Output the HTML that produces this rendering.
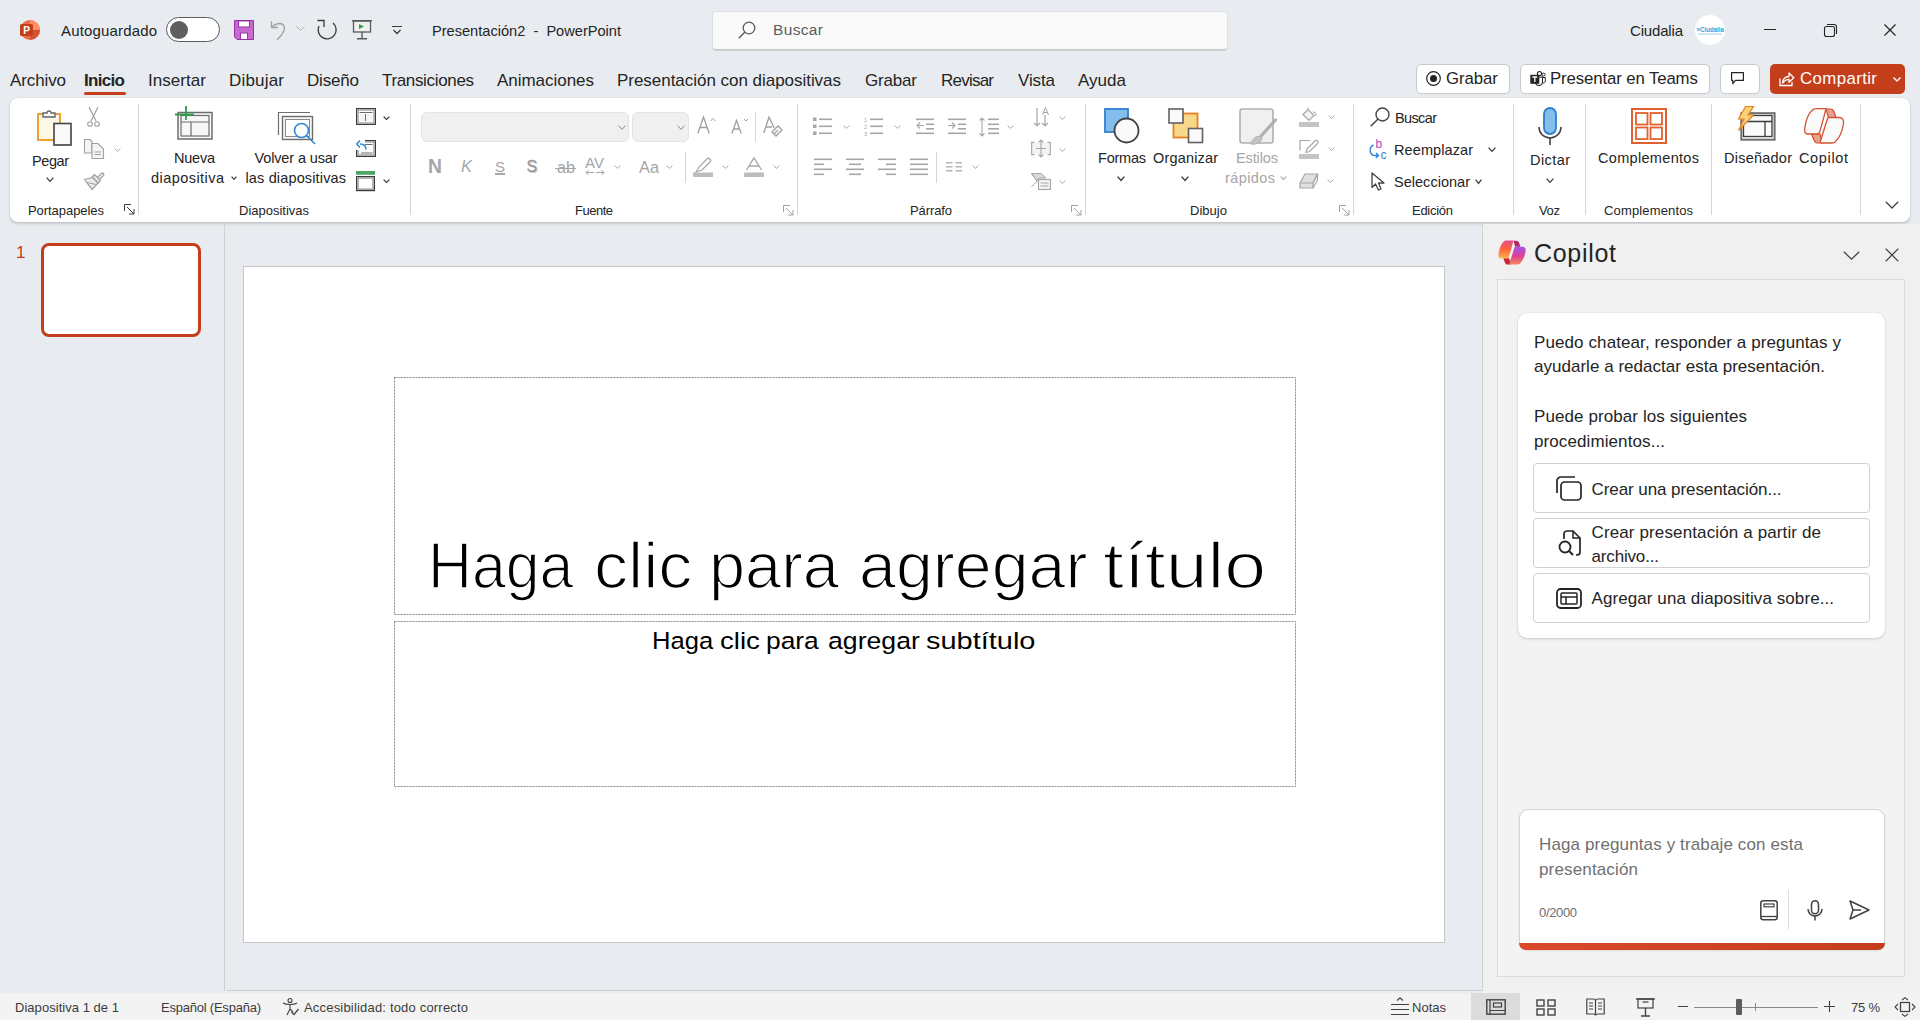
<!DOCTYPE html><html><head><meta charset="utf-8"><style>
html,body{margin:0;padding:0;width:1920px;height:1020px;overflow:hidden;background:#e8ecf0;font-family:"Liberation Sans",sans-serif;}
.t{position:absolute;white-space:nowrap;line-height:1;}
.r{position:absolute;box-sizing:border-box;}
svg.r{overflow:visible}
</style></head><body>
<svg class="r" style="left:20px;top:20px" width="20" height="20" viewBox="0 0 20 20"><circle cx="10" cy="10" r="10" fill="#ed6c47"/><path d="M10 0 A10 10 0 0 1 20 10 L10 10Z" fill="#ff8f6b"/><path d="M10 10 L20 10 A10 10 0 0 1 10 20Z" fill="#d35230"/>
<rect x="0" y="4" width="13" height="12" rx="1.5" fill="#c43e1c"/><text x="6.5" y="14" font-family="Liberation Sans" font-weight="bold" font-size="10" fill="#fff" text-anchor="middle">P</text></svg>
<div class="t" style="left:61.00px;top:23.30px;font-size:15.00px;color:#242424;letter-spacing:0.160px;">Autoguardado</div>
<div class="r" style="left:166px;top:17px;width:54px;height:25px;border:1px solid #5c5c5c;border-radius:13px;background:#fff"></div>
<div class="r" style="left:170px;top:21px;width:18px;height:18px;border-radius:50%;background:#5f5f5f"></div>
<svg class="r" style="left:234px;top:20px" width="20" height="20" viewBox="0 0 20 20"><path d="M0.5 0.5 H19.5 V19.5 H3 L0.5 17 Z" fill="#c86bd0" stroke="#9b2fae" stroke-width="1"/>
<rect x="4.5" y="1" width="11" height="6" fill="#fff" stroke="#9b2fae" stroke-width="1"/><rect x="6.5" y="13" width="7" height="6.5" fill="#fff" stroke="#9b2fae" stroke-width="1"/></svg>
<svg class="r" style="left:270px;top:20px" width="20" height="20" viewBox="0 0 20 20"><path d="M1.5 1 V7.5 H8" fill="none" stroke="#a0a0a0" stroke-width="1.3"/><path d="M2 7.5 C5 3 12 2 14 6 C16 10 11 16 7 20" fill="none" stroke="#a0a0a0" stroke-width="1.3"/></svg>
<svg class="r" style="left:296px;top:26px" width="9" height="6" viewBox="0 0 9 6"><path d="M0.5 0.5 L4.5 4.5 L8.5 0.5" fill="none" stroke="#b0b0b0" stroke-width="1"/></svg>
<svg class="r" style="left:317px;top:20px" width="20" height="20" viewBox="0 0 20 20"><path d="M2 6 A9 9 0 1 0 16 3" transform="translate(0,0)" fill="none" stroke="#3b3b3b" stroke-width="1.3"/><path d="M0.5 0.5 H7 V7" fill="none" stroke="#3b3b3b" stroke-width="1.3"/></svg>
<svg class="r" style="left:352px;top:20px" width="20" height="20" viewBox="0 0 20 20"><rect x="1.5" y="1" width="17" height="11" fill="#f0f0f0" stroke="#5a5a5a" stroke-width="1.3"/><path d="M0 0.7 H20" stroke="#5a5a5a" stroke-width="1.4"/><path d="M7 4 L12 6.5 L7 9Z" fill="#2aa24a"/><path d="M10 12 V18.5 M5 18.8 H15" stroke="#5a5a5a" stroke-width="1.4"/></svg>
<svg class="r" style="left:392px;top:26px" width="10" height="10" viewBox="0 0 10 10"><path d="M0 0.5 H10" stroke="#3b3b3b" stroke-width="1"/><path d="M1.5 4 L5 7.5 L8.5 4" fill="none" stroke="#3b3b3b" stroke-width="1.3"/></svg>
<div class="t" style="left:432.00px;top:23.63px;font-size:14.60px;color:#242424;">Presentación2&nbsp;&nbsp;-&nbsp;&nbsp;PowerPoint</div>
<div class="r" style="left:712px;top:11px;width:516px;height:39px;background:#fafafa;border-radius:4.5px;border:1px solid #dedede;border-bottom-color:#c8c8c8;box-shadow:0 1px 0.5px rgba(0,0,0,0.10)"></div>
<svg class="r" style="left:738px;top:21px" width="18" height="18" viewBox="0 0 18 18"><circle cx="11" cy="7" r="5.8" fill="none" stroke="#5c5c5c" stroke-width="1.3"/><path d="M7 11 L0.8 17.2" stroke="#5c5c5c" stroke-width="1.4"/></svg>
<div class="t" style="left:773.00px;top:21.87px;font-size:15.50px;color:#5c5c5c;letter-spacing:0.352px;">Buscar</div>
<div class="t" style="left:1630.00px;top:23.30px;font-size:15.00px;color:#242424;letter-spacing:-0.171px;">Ciudalia</div>
<div class="r" style="left:1695px;top:15px;width:30px;height:30px;border-radius:50%;background:#fff"></div>
<svg class="r" style="left:1695px;top:15px" width="30" height="30" viewBox="0 0 30 30"><text x="1.5" y="16.8" font-family="Liberation Sans" font-weight="bold" font-size="6.8" fill="#1ba8e4" textLength="27.5" lengthAdjust="spacingAndGlyphs">&#187;Ciudalia</text><rect x="3" y="18.5" width="24" height="1.2" fill="#a8d8f0"/></svg>
<div class="r" style="left:1764px;top:29px;width:12px;height:1px;background:#242424"></div>
<svg class="r" style="left:1824px;top:24px" width="13" height="13" viewBox="0 0 13 13"><rect x="0.5" y="2.5" width="10" height="10" rx="2" fill="none" stroke="#242424" stroke-width="1.1"/><path d="M3 0.5 H10 A2.5 2.5 0 0 1 12.5 3 V10" fill="none" stroke="#242424" stroke-width="1.1"/></svg>
<svg class="r" style="left:1884px;top:24px" width="12" height="12" viewBox="0 0 12 12"><path d="M0.5 0.5 L11.5 11.5 M11.5 0.5 L0.5 11.5" stroke="#242424" stroke-width="1.2"/></svg>
<div class="t" style="left:10.00px;top:71.60px;font-size:17.00px;color:#242424;letter-spacing:-0.114px;">Archivo</div>
<div class="t" style="left:84.00px;top:71.60px;font-size:17.00px;color:#242424;letter-spacing:-0.678px;font-weight:bold;">Inicio</div>
<div class="t" style="left:148.00px;top:71.60px;font-size:17.00px;color:#242424;letter-spacing:0.053px;">Insertar</div>
<div class="t" style="left:229.00px;top:71.60px;font-size:17.00px;color:#242424;letter-spacing:0.191px;">Dibujar</div>
<div class="t" style="left:307.00px;top:71.60px;font-size:17.00px;color:#242424;letter-spacing:-0.183px;">Diseño</div>
<div class="t" style="left:382.00px;top:71.60px;font-size:17.00px;color:#242424;letter-spacing:-0.340px;">Transiciones</div>
<div class="t" style="left:497.00px;top:71.60px;font-size:17.00px;color:#242424;letter-spacing:-0.032px;">Animaciones</div>
<div class="t" style="left:617.00px;top:71.60px;font-size:17.00px;color:#242424;letter-spacing:-0.032px;">Presentación con diapositivas</div>
<div class="t" style="left:865.00px;top:71.60px;font-size:17.00px;color:#242424;letter-spacing:-0.181px;">Grabar</div>
<div class="t" style="left:941.00px;top:71.60px;font-size:17.00px;color:#242424;letter-spacing:-0.770px;">Revisar</div>
<div class="t" style="left:1018.00px;top:71.60px;font-size:17.00px;color:#242424;letter-spacing:-0.121px;">Vista</div>
<div class="t" style="left:1078.00px;top:71.60px;font-size:17.00px;color:#242424;letter-spacing:0.027px;">Ayuda</div>
<div class="r" style="left:84px;top:92px;width:42px;height:3px;background:#c43e1c;border-radius:2px"></div>
<div class="r" style="left:1416px;top:64px;width:94px;height:30px;background:#fff;border:1px solid #c9c9c9;border-radius:5px"></div>
<svg class="r" style="left:1426px;top:71px" width="15" height="15" viewBox="0 0 15 15"><circle cx="7.5" cy="7.5" r="6.8" fill="none" stroke="#242424" stroke-width="1.2"/><circle cx="7.5" cy="7.5" r="3.5" fill="#242424"/></svg>
<div class="t" style="left:1446.00px;top:70.77px;font-size:16.80px;color:#242424;letter-spacing:-0.056px;">Grabar</div>
<div class="r" style="left:1520px;top:64px;width:190px;height:30px;background:#fff;border:1px solid #c9c9c9;border-radius:5px"></div>
<svg class="r" style="left:1530px;top:71px" width="16" height="16" viewBox="0 0 16 16"><circle cx="9.5" cy="2.6" r="2.1" fill="#fff" stroke="#242424" stroke-width="1.1"/><circle cx="13.6" cy="3.6" r="1.5" fill="#fff" stroke="#242424" stroke-width="1"/><path d="M11.5 6.5 H15.3 V10.5 A2.5 2.5 0 0 1 11.5 11.5" fill="#fff" stroke="#242424" stroke-width="1"/><path d="M5.5 6 H12.5 V11 A3.5 3.5 0 0 1 5.5 11 Z" fill="#fff" stroke="#242424" stroke-width="1.1"/><rect x="0.3" y="3.8" width="9" height="9" fill="#242424"/><path d="M2.3 6 H7.3 M4.8 6 V11" stroke="#fff" stroke-width="1.3"/></svg>
<div class="t" style="left:1550.00px;top:70.77px;font-size:16.80px;color:#242424;letter-spacing:-0.119px;">Presentar en Teams</div>
<div class="r" style="left:1720px;top:64px;width:40px;height:30px;background:#fff;border:1px solid #c9c9c9;border-radius:5px"></div>
<svg class="r" style="left:1731px;top:72px" width="14" height="13" viewBox="0 0 14 13"><path d="M0.6 0.6 H12.4 V8.4 H4.5 L1.8 11.5 V8.4 H0.6Z" fill="none" stroke="#242424" stroke-width="1.2" stroke-linejoin="round"/></svg>
<div class="r" style="left:1770px;top:64px;width:135px;height:30px;background:#c43e1c;border-radius:5px"></div>
<svg class="r" style="left:1779px;top:71px" width="16" height="16" viewBox="0 0 16 16"><path d="M1 7.5 V14.5 H13 V11" fill="none" stroke="#fff" stroke-width="1.3"/><path d="M3.5 12 C3.5 8 6.5 5.5 10 5.5 V2 L14.8 6.8 L10 11.3 V8.3 C7.5 8.3 5.5 9.5 3.5 12Z" fill="none" stroke="#fff" stroke-width="1.3" stroke-linejoin="round"/></svg>
<div class="t" style="left:1800.00px;top:70.77px;font-size:16.80px;color:#ffffff;letter-spacing:0.407px;">Compartir</div>
<svg class="r" style="left:1893px;top:77px" width="8" height="5" viewBox="0 0 8 5"><path d="M0.5 0.5 L4 4 L7.5 0.5" fill="none" stroke="#fff" stroke-width="1.3"/></svg>
<div class="r" style="left:10px;top:98px;width:1900px;height:124px;background:#fff;border-radius:8px;box-shadow:0 1.5px 3px rgba(0,0,0,0.16),0 0 1px rgba(0,0,0,0.10)"></div>
<svg class="r" style="left:37px;top:108px" width="35" height="38" viewBox="0 0 35 38"><rect x="1" y="6" width="22" height="26" fill="#fff8e6" stroke="#f0a030" stroke-width="2"/>
<path d="M6 9 V5 H10 A2 2 0 0 1 14 5 H18 V9 Z" fill="#fafafa" stroke="#616161" stroke-width="1.3"/>
<rect x="17" y="15.5" width="17" height="21.5" fill="#fafafa" stroke="#424242" stroke-width="1.6"/></svg>
<div class="t" style="left:32.00px;top:153.72px;font-size:14.50px;color:#242424;letter-spacing:-0.423px;">Pegar</div>
<svg class="r" style="left:46px;top:177px" width="8" height="5" viewBox="0 0 8 5"><path d="M0.6 0.6 L4.0 4.4 L7.4 0.6" fill="none" stroke="#3b3b3b" stroke-width="1.2"/></svg>
<svg class="r" style="left:87px;top:107px" width="13" height="20" viewBox="0 0 13 20"><path d="M2 0 L9 14 M11 0 L4 14" stroke="#a0a0a0" stroke-width="1.2"/><circle cx="3" cy="17" r="2.3" fill="none" stroke="#a0a0a0" stroke-width="1.1"/><circle cx="10" cy="17" r="2.3" fill="none" stroke="#a0a0a0" stroke-width="1.1"/></svg>
<svg class="r" style="left:84px;top:139px" width="21" height="20" viewBox="0 0 21 20"><path d="M0.5 0.5 H6 L8 2.5 V14 H0.5Z" fill="#f5f5f5" stroke="#a0a0a0" stroke-width="1.1"/><path d="M8 4.5 H14 L19.5 10 V19.5 H8Z" fill="#f5f5f5" stroke="#a0a0a0" stroke-width="1.1"/><path d="M10.5 13 H17 M10.5 15.5 H17" stroke="#a0a0a0" stroke-width="1"/></svg>
<svg class="r" style="left:114px;top:148px" width="7" height="4" viewBox="0 0 7 4"><path d="M0.6 0.6 L3.5 3.4 L6.4 0.6" fill="none" stroke="#b0b0b0" stroke-width="1"/></svg>
<svg class="r" style="left:84px;top:171px" width="20" height="19" viewBox="0 0 20 19"><path d="M13.5 6.5 L17.5 2.5 A1.4 1.4 0 0 1 19.5 4.5 L15.5 8.5" fill="#f3f3f3" stroke="#a0a0a0" stroke-width="1.2"/><path d="M8 6 L10.5 3.5 L16.5 9.5 L14 12 Z" fill="#e6e6e6" stroke="#a0a0a0" stroke-width="1.2" stroke-linejoin="round"/><path d="M0.5 8.5 L8.5 6.5 L14 12 L8 18.5 Z" fill="#ececec" stroke="#a0a0a0" stroke-width="1.2" stroke-linejoin="round"/><path d="M3 11.5 L12 13.5 M4 13 L8 18" fill="none" stroke="#a0a0a0" stroke-width="1"/></svg>
<div class="t" style="left:28.00px;top:203.99px;font-size:13.00px;color:#242424;letter-spacing:-0.055px;">Portapapeles</div>
<svg class="r" style="left:124px;top:204px" width="11" height="11" viewBox="0 0 11 11"><path d="M0.5 7 V0.5 H7" fill="none" stroke="#3b3b3b" stroke-width="1"/><path d="M3 3 L10 10 M10 5 V10 H5" fill="none" stroke="#3b3b3b" stroke-width="1"/></svg>
<div class="r" style="left:138px;top:104px;width:1px;height:111px;background:#d6d6d6"></div>
<svg class="r" style="left:175px;top:106px" width="39" height="34" viewBox="0 0 39 34"><rect x="3" y="6.5" width="34" height="26.5" fill="#f7f7f7" stroke="#6e6e6e" stroke-width="1.5"/><rect x="6" y="9.5" width="28" height="20.5" fill="none" stroke="#6e6e6e" stroke-width="1.2"/>
<path d="M6 16 H34 M16 16 V30" stroke="#6e6e6e" stroke-width="1.2"/><path d="M11 0 V14 M0 8.5 H19" stroke="#2e9e4e" stroke-width="1.8"/></svg>
<div class="t" style="left:174.00px;top:151.22px;font-size:14.50px;color:#242424;letter-spacing:-0.228px;">Nueva</div>
<div class="t" style="left:151.00px;top:170.72px;font-size:14.50px;color:#242424;letter-spacing:0.449px;">diapositiva</div>
<svg class="r" style="left:231px;top:176px" width="6" height="4" viewBox="0 0 6 4"><path d="M0.6 0.6 L3.0 3.4 L5.4 0.6" fill="none" stroke="#3b3b3b" stroke-width="1.2"/></svg>
<svg class="r" style="left:278px;top:112px" width="38" height="35" viewBox="0 0 38 35"><path d="M0.5 23 V0.5 H32" fill="none" stroke="#6e6e6e" stroke-width="1.2"/><rect x="4.5" y="4.5" width="30" height="23" fill="#f5f5f5" stroke="#6e6e6e" stroke-width="1.4"/><rect x="7.5" y="7.5" width="24" height="17" fill="#fff" stroke="#8a8a8a" stroke-width="1"/>
<circle cx="23.5" cy="18.5" r="7" fill="#fff" stroke="#2f86d4" stroke-width="1.6"/><path d="M28.5 23.5 L37 32" stroke="#2f86d4" stroke-width="1.6"/></svg>
<div class="t" style="left:254.50px;top:151.22px;font-size:14.50px;color:#242424;letter-spacing:-0.135px;">Volver a usar</div>
<div class="t" style="left:245.50px;top:170.72px;font-size:14.50px;color:#242424;letter-spacing:0.145px;">las diapositivas</div>
<svg class="r" style="left:356px;top:108px" width="20" height="17" viewBox="0 0 20 17"><rect x="0.6" y="0.6" width="18.8" height="15.8" fill="#fff" stroke="#3b3b3b" stroke-width="1.2"/><rect x="2" y="2" width="16" height="13" fill="none" stroke="#a0a0a0" stroke-width="1.4"/><path d="M3.5 4.5 H16.5 M9.5 6 V13" stroke="#6e6e6e" stroke-width="1.2"/><rect x="3.5" y="6" width="5" height="7" fill="#f5f5f5"/><rect x="10.5" y="6" width="6" height="7" fill="#f5f5f5"/></svg>
<svg class="r" style="left:383px;top:116px" width="7" height="4" viewBox="0 0 7 4"><path d="M0.6 0.6 L3.5 3.4 L6.4 0.6" fill="none" stroke="#3b3b3b" stroke-width="1.3"/></svg>
<svg class="r" style="left:356px;top:139px" width="20" height="18" viewBox="0 0 20 18"><rect x="0.6" y="1.6" width="18.8" height="15.8" fill="#fff" stroke="#3b3b3b" stroke-width="1.2"/><rect x="2" y="3" width="16" height="13" fill="none" stroke="#a0a0a0" stroke-width="1.4"/><path d="M5 5.5 H16.5 M5 14 H16.5" stroke="#6e6e6e" stroke-width="1.1"/><rect x="-1" y="0" width="10" height="11" fill="#fff"/><path d="M10 10.5 C10 7 8 5 4 5 M4 1.5 L0.8 5 L4 8.5" fill="none" stroke="#2f86d4" stroke-width="1.5"/></svg>
<svg class="r" style="left:356px;top:171px" width="20" height="20" viewBox="0 0 20 20"><rect x="0" y="0" width="19" height="3.8" fill="#4aa864"/><rect x="0.6" y="5.6" width="17.8" height="14" fill="#fff" stroke="#3b3b3b" stroke-width="1.2"/><rect x="2" y="7" width="15" height="11.2" fill="none" stroke="#a0a0a0" stroke-width="1.5"/></svg>
<svg class="r" style="left:383px;top:179px" width="7" height="4" viewBox="0 0 7 4"><path d="M0.6 0.6 L3.5 3.4 L6.4 0.6" fill="none" stroke="#3b3b3b" stroke-width="1.3"/></svg>
<div class="t" style="left:239.00px;top:203.99px;font-size:13.00px;color:#242424;letter-spacing:-0.007px;">Diapositivas</div>
<div class="r" style="left:410px;top:104px;width:1px;height:111px;background:#d6d6d6"></div>
<div class="r" style="left:421px;top:112px;width:208px;height:30px;background:#f0f0f0;border:1px solid #e3e3e3;border-radius:6px"></div>
<svg class="r" style="left:618px;top:125px" width="8" height="5" viewBox="0 0 8 5"><path d="M0.6 0.6 L4.0 4.4 L7.4 0.6" fill="none" stroke="#8a8a8a" stroke-width="1"/></svg>
<div class="r" style="left:632px;top:112px;width:57px;height:30px;background:#f0f0f0;border:1px solid #e3e3e3;border-radius:6px"></div>
<svg class="r" style="left:677px;top:125px" width="8" height="5" viewBox="0 0 8 5"><path d="M0.6 0.6 L4.0 4.4 L7.4 0.6" fill="none" stroke="#8a8a8a" stroke-width="1"/></svg>
<svg class="r" style="left:697px;top:116px" width="20" height="18" viewBox="0 0 20 18"><path d="M0.8 17.5 L6.5 1 L12.2 17.5 M3 11.5 H10" fill="none" stroke="#a0a0a0" stroke-width="1.3"/><path d="M13.5 5 L16 2.5 L18.5 5" fill="none" stroke="#a0a0a0" stroke-width="1"/></svg>
<svg class="r" style="left:731px;top:118px" width="18" height="16" viewBox="0 0 18 16"><path d="M0.8 15.5 L5.5 2.5 L10.2 15.5 M2.5 11 H8.5" fill="none" stroke="#a0a0a0" stroke-width="1.3"/><path d="M13 1 L15 3 L17 1" fill="none" stroke="#a0a0a0" stroke-width="1"/></svg>
<div class="r" style="left:755px;top:112px;width:1px;height:30px;background:#d6d6d6"></div>
<svg class="r" style="left:763px;top:116px" width="20" height="20" viewBox="0 0 20 20"><path d="M0.8 17 L6 1 L11.2 12 M3 11 H9" fill="none" stroke="#a0a0a0" stroke-width="1.3"/><path d="M9 16 L15 10 L19 14 L13 20Z M11 18 L15 14" fill="none" stroke="#a0a0a0" stroke-width="1.3"/></svg>
<div class="t" style="left:428.00px;top:156.58px;font-size:19.39px;color:#a6a6a6;font-weight:bold">N</div>
<div class="t" style="left:461.00px;top:158.03px;font-size:16.49px;color:#a6a6a6;font-style:italic">K</div>
<div class="t" style="left:495.00px;top:159.29px;font-size:15.00px;color:#a6a6a6;">S</div>
<div class="r" style="left:495px;top:173px;width:10px;height:2px;background:#a6a6a6"></div>
<div class="t" style="left:526.50px;top:158.95px;font-size:16.00px;color:#9a9a9a;text-shadow:1px 1px 0 #d6d6d6;-webkit-text-stroke:0.4px #9a9a9a">S</div>
<div class="t" style="left:557.00px;top:159.29px;font-size:16.18px;color:#a6a6a6;">ab</div>
<div class="r" style="left:555px;top:168px;width:21px;height:1.2px;background:#a6a6a6"></div>
<div class="t" style="left:585.00px;top:155.23px;font-size:15.08px;color:#a6a6a6;">AV</div>
<svg class="r" style="left:585px;top:168px" width="20" height="9" viewBox="0 0 20 9"><path d="M1 4.5 H9 M1 4.5 L3.5 2 M1 4.5 L3.5 7 M11 4.5 H19 M19 4.5 L16.5 2 M19 4.5 L16.5 7" fill="none" stroke="#a6a6a6" stroke-width="1"/></svg>
<svg class="r" style="left:614px;top:165px" width="7" height="4" viewBox="0 0 7 4"><path d="M0.6 0.6 L3.5 3.4 L6.4 0.6" fill="none" stroke="#a6a6a6" stroke-width="1"/></svg>
<div class="t" style="left:639.00px;top:159.15px;font-size:16.35px;color:#a6a6a6;">Aa</div>
<svg class="r" style="left:666px;top:165px" width="7" height="4" viewBox="0 0 7 4"><path d="M0.6 0.6 L3.5 3.4 L6.4 0.6" fill="none" stroke="#a6a6a6" stroke-width="1"/></svg>
<div class="r" style="left:685px;top:152px;width:1px;height:31px;background:#d6d6d6"></div>
<svg class="r" style="left:693px;top:157px" width="20" height="20" viewBox="0 0 20 20"><path d="M3 15 L6 10 L14 2 A2 2 0 0 1 17 5 L9 13 L3 15Z" fill="none" stroke="#a6a6a6" stroke-width="1.2"/><rect x="0" y="15.5" width="20" height="4.5" fill="#bdbdbd"/></svg>
<svg class="r" style="left:722px;top:165px" width="7" height="4" viewBox="0 0 7 4"><path d="M0.6 0.6 L3.5 3.4 L6.4 0.6" fill="none" stroke="#a6a6a6" stroke-width="1"/></svg>
<svg class="r" style="left:744px;top:157px" width="20" height="20" viewBox="0 0 20 20"><path d="M2.5 13 L10 0.8 L17.5 13 M5 9 H15" fill="none" stroke="#a6a6a6" stroke-width="1.3"/><rect x="0" y="15.5" width="20" height="4.5" fill="#bdbdbd"/></svg>
<svg class="r" style="left:773px;top:165px" width="7" height="4" viewBox="0 0 7 4"><path d="M0.6 0.6 L3.5 3.4 L6.4 0.6" fill="none" stroke="#a6a6a6" stroke-width="1"/></svg>
<div class="t" style="left:575.00px;top:203.99px;font-size:13.00px;color:#242424;letter-spacing:-0.494px;">Fuente</div>
<svg class="r" style="left:783px;top:205px" width="11" height="11" viewBox="0 0 11 11"><path d="M0.5 7 V0.5 H7" fill="none" stroke="#a0a0a0" stroke-width="1"/><path d="M3 3 L10 10 M10 5 V10 H5" fill="none" stroke="#a0a0a0" stroke-width="1"/></svg>
<div class="r" style="left:797px;top:104px;width:1px;height:111px;background:#d6d6d6"></div>
<svg class="r" style="left:813px;top:117px" width="20" height="20" viewBox="0 0 20 20"><rect x="0" y="0.5" width="3.5" height="3.5" fill="#a6a6a6"/><rect x="0" y="7.5" width="3.5" height="3.5" fill="#a6a6a6"/><rect x="0" y="14.5" width="3.5" height="3.5" fill="#a6a6a6"/><rect x="6" y="1.5" width="13" height="1.6" fill="#a6a6a6"/><rect x="6" y="8.5" width="13" height="1.6" fill="#a6a6a6"/><rect x="6" y="15.5" width="13" height="1.6" fill="#a6a6a6"/></svg>
<svg class="r" style="left:843px;top:125px" width="7" height="4" viewBox="0 0 7 4"><path d="M0.6 0.6 L3.5 3.4 L6.4 0.6" fill="none" stroke="#a6a6a6" stroke-width="1"/></svg>
<svg class="r" style="left:864px;top:117px" width="20" height="20" viewBox="0 0 20 20"><text x="0" y="5" font-size="5.5" fill="#a6a6a6" font-family="Liberation Sans">1</text><text x="0" y="12" font-size="5.5" fill="#a6a6a6" font-family="Liberation Sans">2</text><text x="0" y="19" font-size="5.5" fill="#a6a6a6" font-family="Liberation Sans">3</text><rect x="6" y="1.5" width="13" height="1.6" fill="#a6a6a6"/><rect x="6" y="8.5" width="13" height="1.6" fill="#a6a6a6"/><rect x="6" y="15.5" width="13" height="1.6" fill="#a6a6a6"/></svg>
<svg class="r" style="left:894px;top:125px" width="7" height="4" viewBox="0 0 7 4"><path d="M0.6 0.6 L3.5 3.4 L6.4 0.6" fill="none" stroke="#a6a6a6" stroke-width="1"/></svg>
<svg class="r" style="left:916px;top:117px" width="18" height="20" viewBox="0 0 18 20"><rect x="0" y="1.5" width="18" height="1.6" fill="#a6a6a6"/><rect x="10" y="6.5" width="8" height="1.6" fill="#a6a6a6"/><rect x="10" y="11" width="8" height="1.6" fill="#a6a6a6"/><rect x="0" y="15.5" width="18" height="1.6" fill="#a6a6a6"/><path d="M8 8.5 H1 M4 5.5 L1 8.5 L4 11.5" fill="none" stroke="#a6a6a6" stroke-width="1.1"/></svg>
<svg class="r" style="left:948px;top:117px" width="18" height="20" viewBox="0 0 18 20"><rect x="0" y="1.5" width="18" height="1.6" fill="#a6a6a6"/><rect x="10" y="6.5" width="8" height="1.6" fill="#a6a6a6"/><rect x="10" y="11" width="8" height="1.6" fill="#a6a6a6"/><rect x="0" y="15.5" width="18" height="1.6" fill="#a6a6a6"/><path d="M0 8.5 H7 M4 5.5 L7 8.5 L4 11.5" fill="none" stroke="#a6a6a6" stroke-width="1.1"/></svg>
<svg class="r" style="left:979px;top:117px" width="20" height="20" viewBox="0 0 20 20"><path d="M3 1 V19 M0.5 3.5 L3 1 L5.5 3.5 M0.5 16.5 L3 19 L5.5 16.5" fill="none" stroke="#a6a6a6" stroke-width="1.1"/><rect x="9" y="1.5" width="11" height="1.6" fill="#a6a6a6"/><rect x="9" y="6.5" width="11" height="1.6" fill="#a6a6a6"/><rect x="9" y="11" width="11" height="1.6" fill="#a6a6a6"/><rect x="9" y="15.5" width="11" height="1.6" fill="#a6a6a6"/></svg>
<svg class="r" style="left:1007px;top:125px" width="7" height="4" viewBox="0 0 7 4"><path d="M0.6 0.6 L3.5 3.4 L6.4 0.6" fill="none" stroke="#a6a6a6" stroke-width="1"/></svg>
<svg class="r" style="left:814px;top:158px" width="20" height="20" viewBox="0 0 20 20"><rect x="0" y="0.5" width="18" height="1.6" fill="#a6a6a6"/><rect x="0" y="5.5" width="10" height="1.6" fill="#a6a6a6"/><rect x="0" y="10.5" width="18" height="1.6" fill="#a6a6a6"/><rect x="0" y="15.5" width="10" height="1.6" fill="#a6a6a6"/></svg>
<svg class="r" style="left:846px;top:158px" width="20" height="20" viewBox="0 0 20 20"><rect x="0" y="0.5" width="18" height="1.6" fill="#a6a6a6"/><rect x="3" y="5.5" width="12" height="1.6" fill="#a6a6a6"/><rect x="0" y="10.5" width="18" height="1.6" fill="#a6a6a6"/><rect x="3" y="15.5" width="12" height="1.6" fill="#a6a6a6"/></svg>
<svg class="r" style="left:878px;top:158px" width="20" height="20" viewBox="0 0 20 20"><rect x="0" y="0.5" width="18" height="1.6" fill="#a6a6a6"/><rect x="8" y="5.5" width="10" height="1.6" fill="#a6a6a6"/><rect x="0" y="10.5" width="18" height="1.6" fill="#a6a6a6"/><rect x="8" y="15.5" width="10" height="1.6" fill="#a6a6a6"/></svg>
<svg class="r" style="left:910px;top:158px" width="20" height="20" viewBox="0 0 20 20"><rect x="0" y="0.5" width="18" height="1.6" fill="#a6a6a6"/><rect x="0" y="5.5" width="18" height="1.6" fill="#a6a6a6"/><rect x="0" y="10.5" width="18" height="1.6" fill="#a6a6a6"/><rect x="0" y="15.5" width="18" height="1.6" fill="#a6a6a6"/></svg>
<div class="r" style="left:936px;top:152px;width:1px;height:31px;background:#d6d6d6"></div>
<svg class="r" style="left:946px;top:162px" width="17" height="10" viewBox="0 0 17 10"><rect x="0" y="0" width="6.5" height="1.5" fill="#b5b5b5"/><rect x="0" y="4" width="6.5" height="1.5" fill="#b5b5b5"/><rect x="0" y="8" width="6.5" height="1.5" fill="#b5b5b5"/><rect x="9.5" y="0" width="6.5" height="1.5" fill="#b5b5b5"/><rect x="9.5" y="4" width="6.5" height="1.5" fill="#b5b5b5"/><rect x="9.5" y="8" width="6.5" height="1.5" fill="#b5b5b5"/></svg>
<svg class="r" style="left:972px;top:165px" width="7" height="4" viewBox="0 0 7 4"><path d="M0.6 0.6 L3.5 3.4 L6.4 0.6" fill="none" stroke="#a6a6a6" stroke-width="1"/></svg>
<svg class="r" style="left:1033px;top:107px" width="18" height="20" viewBox="0 0 18 20"><path d="M4 1 V19 M1 16 L4 19 L7 16 M12 8 V19 M9 16 L12 19 L15 16" fill="none" stroke="#a6a6a6" stroke-width="1.2"/><path d="M9.5 8 L12.5 0.5 L15.5 8 M10.5 5.5 H14.5" fill="none" stroke="#a6a6a6" stroke-width="1"/></svg>
<svg class="r" style="left:1059px;top:116px" width="7" height="4" viewBox="0 0 7 4"><path d="M0.6 0.6 L3.5 3.4 L6.4 0.6" fill="none" stroke="#a6a6a6" stroke-width="1"/></svg>
<svg class="r" style="left:1031px;top:139px" width="20" height="19" viewBox="0 0 20 19"><path d="M3.5 3.5 H0.8 V15.5 H3.5 M16.5 3.5 H19.2 V15.5 H16.5" fill="none" stroke="#a6a6a6" stroke-width="1.4"/><rect x="1.5" y="4" width="17" height="11" fill="#f3f3f3"/><path d="M10 1 V18 M7.5 3.5 L10 1 L12.5 3.5 M7.5 15.5 L10 18 L12.5 15.5 M5 9.5 H15" fill="none" stroke="#a6a6a6" stroke-width="1.1"/></svg>
<svg class="r" style="left:1059px;top:148px" width="7" height="4" viewBox="0 0 7 4"><path d="M0.6 0.6 L3.5 3.4 L6.4 0.6" fill="none" stroke="#a6a6a6" stroke-width="1"/></svg>
<svg class="r" style="left:1031px;top:173px" width="20" height="17" viewBox="0 0 20 17"><path d="M0.5 0.5 H10 L15 5 H8 L6 8 L4 5 Z" fill="#d9d9d9" stroke="#a6a6a6" stroke-width="1"/><path d="M0.5 0.5 L6 8 L0.5 14" fill="none" stroke="#a6a6a6" stroke-width="1"/><rect x="7.5" y="6.5" width="12" height="10" fill="#f3f3f3" stroke="#a6a6a6" stroke-width="1.1"/><path d="M9.5 10 H17.5 M9.5 13 H17.5" stroke="#a6a6a6" stroke-width="1"/></svg>
<svg class="r" style="left:1059px;top:180px" width="7" height="4" viewBox="0 0 7 4"><path d="M0.6 0.6 L3.5 3.4 L6.4 0.6" fill="none" stroke="#a6a6a6" stroke-width="1"/></svg>
<div class="t" style="left:910.00px;top:203.99px;font-size:13.00px;color:#242424;letter-spacing:-0.105px;">Párrafo</div>
<svg class="r" style="left:1071px;top:205px" width="11" height="11" viewBox="0 0 11 11"><path d="M0.5 7 V0.5 H7" fill="none" stroke="#a0a0a0" stroke-width="1"/><path d="M3 3 L10 10 M10 5 V10 H5" fill="none" stroke="#a0a0a0" stroke-width="1"/></svg>
<div class="r" style="left:1085px;top:104px;width:1px;height:111px;background:#d6d6d6"></div>
<svg class="r" style="left:1104px;top:108px" width="36" height="36" viewBox="0 0 36 36"><rect x="1" y="1" width="23" height="23" fill="#83beec" stroke="#2f7fd1" stroke-width="1.8"/><circle cx="22.5" cy="22.5" r="12" fill="#fafafa" stroke="#424242" stroke-width="1.8"/></svg>
<div class="t" style="left:1098.00px;top:151.22px;font-size:14.50px;color:#242424;letter-spacing:-0.228px;">Formas</div>
<svg class="r" style="left:1117px;top:176px" width="8" height="5" viewBox="0 0 8 5"><path d="M0.6 0.6 L4.0 4.4 L7.4 0.6" fill="none" stroke="#3b3b3b" stroke-width="1.4"/></svg>
<svg class="r" style="left:1168px;top:108px" width="36" height="36" viewBox="0 0 36 36"><rect x="5.5" y="5.5" width="24" height="24" fill="#f8d98c" stroke="#e8801e" stroke-width="1.8"/><rect x="1" y="1" width="14" height="14" fill="#fafafa" stroke="#616161" stroke-width="1.6"/><rect x="20.5" y="20.5" width="14" height="14" fill="#fafafa" stroke="#616161" stroke-width="1.6"/></svg>
<div class="t" style="left:1153.00px;top:151.22px;font-size:14.50px;color:#242424;letter-spacing:0.168px;">Organizar</div>
<svg class="r" style="left:1181px;top:176px" width="8" height="5" viewBox="0 0 8 5"><path d="M0.6 0.6 L4.0 4.4 L7.4 0.6" fill="none" stroke="#3b3b3b" stroke-width="1.4"/></svg>
<svg class="r" style="left:1239px;top:108px" width="38" height="38" viewBox="0 0 38 38"><rect x="1" y="1" width="33" height="34" rx="2.5" fill="#f0f0f0" stroke="#b0b0b0" stroke-width="1.6"/><path d="M36.5 12 L22 28" stroke="#b0b0b0" stroke-width="3.2" stroke-linecap="round"/><path d="M12 36 C14 29 19 27 23 29 C23 34 18 37 12 36Z" fill="#c4c4c4" stroke="#b0b0b0" stroke-width="1"/></svg>
<div class="t" style="left:1236.00px;top:151.22px;font-size:14.50px;color:#a6a6a6;letter-spacing:-0.118px;">Estilos</div>
<div class="t" style="left:1225.00px;top:170.72px;font-size:14.50px;color:#a6a6a6;letter-spacing:0.408px;">rápidos</div>
<svg class="r" style="left:1280px;top:176px" width="7" height="4" viewBox="0 0 7 4"><path d="M0.6 0.6 L3.5 3.4 L6.4 0.6" fill="none" stroke="#a6a6a6" stroke-width="1.1"/></svg>
<svg class="r" style="left:1299px;top:107px" width="20" height="20" viewBox="0 0 20 20"><path d="M4 7.5 L9 2.5 L15 8.5 L10 13.5 Z" fill="#f3f3f3" stroke="#a6a6a6" stroke-width="1.2"/><path d="M9 2.5 V0.5 M14 5 C16 5 17 7 17 9" fill="none" stroke="#a6a6a6" stroke-width="1.1"/><rect x="0" y="15" width="20" height="5" fill="#c4c4c4"/></svg>
<svg class="r" style="left:1328px;top:115px" width="7" height="4" viewBox="0 0 7 4"><path d="M0.6 0.6 L3.5 3.4 L6.4 0.6" fill="none" stroke="#a6a6a6" stroke-width="1"/></svg>
<svg class="r" style="left:1299px;top:139px" width="20" height="20" viewBox="0 0 20 20"><path d="M11 1.5 H1 V11.5" fill="none" stroke="#a6a6a6" stroke-width="1.2"/><path d="M8 10 L16 2 A1.6 1.6 0 0 1 18.5 4.5 L10.5 12.5 L7 13.5Z" fill="none" stroke="#a6a6a6" stroke-width="1.2"/><rect x="0" y="15" width="20" height="5" fill="#c4c4c4"/></svg>
<svg class="r" style="left:1328px;top:147px" width="7" height="4" viewBox="0 0 7 4"><path d="M0.6 0.6 L3.5 3.4 L6.4 0.6" fill="none" stroke="#a6a6a6" stroke-width="1"/></svg>
<svg class="r" style="left:1299px;top:172px" width="20" height="18" viewBox="0 0 20 18"><path d="M1 11 L6 2 H18.5 L14 11 V16 H1Z" fill="#e0e0e0" stroke="#a6a6a6" stroke-width="1.2"/><path d="M1 11 H14 L18.5 2 V8 L14 16" fill="none" stroke="#a6a6a6" stroke-width="1.2"/></svg>
<svg class="r" style="left:1327px;top:179px" width="7" height="4" viewBox="0 0 7 4"><path d="M0.6 0.6 L3.5 3.4 L6.4 0.6" fill="none" stroke="#a6a6a6" stroke-width="1"/></svg>
<div class="t" style="left:1190.00px;top:203.99px;font-size:13.00px;color:#242424;letter-spacing:0.029px;">Dibujo</div>
<svg class="r" style="left:1339px;top:205px" width="11" height="11" viewBox="0 0 11 11"><path d="M0.5 7 V0.5 H7" fill="none" stroke="#a0a0a0" stroke-width="1"/><path d="M3 3 L10 10 M10 5 V10 H5" fill="none" stroke="#a0a0a0" stroke-width="1"/></svg>
<div class="r" style="left:1353px;top:104px;width:1px;height:111px;background:#d6d6d6"></div>
<svg class="r" style="left:1370px;top:107px" width="20" height="20" viewBox="0 0 20 20"><circle cx="12.5" cy="7.5" r="6.5" fill="#fff" stroke="#424242" stroke-width="1.4"/><path d="M8 12 L0.8 19.2" stroke="#424242" stroke-width="1.5"/></svg>
<div class="t" style="left:1395.00px;top:110.72px;font-size:14.50px;color:#242424;letter-spacing:-0.625px;">Buscar</div>
<svg class="r" style="left:1369px;top:138px" width="19" height="22" viewBox="0 0 19 22"><text x="6.5" y="10" font-size="12" fill="#b146c2" font-family="Liberation Sans">b</text><text x="11.5" y="21" font-size="12" fill="#2f86d4" font-family="Liberation Sans">c</text><path d="M4.5 7 C0 9 0 16 5 17.5 L9.5 17.5 M7 15 L9.5 17.5 L7 20" fill="none" stroke="#2f86d4" stroke-width="1.4"/></svg>
<div class="t" style="left:1394.00px;top:142.72px;font-size:14.50px;color:#242424;letter-spacing:0.093px;">Reemplazar</div>
<svg class="r" style="left:1488px;top:147px" width="8" height="5" viewBox="0 0 8 5"><path d="M0.6 0.6 L4.0 4.4 L7.4 0.6" fill="none" stroke="#3b3b3b" stroke-width="1.3"/></svg>
<svg class="r" style="left:1371px;top:172px" width="15" height="19" viewBox="0 0 15 19"><path d="M1 1 V15.5 L4.5 12 L7.5 18 L10 17 L7.5 11 H13Z" fill="#fff" stroke="#424242" stroke-width="1.3" stroke-linejoin="round"/></svg>
<div class="t" style="left:1394.00px;top:174.72px;font-size:14.50px;color:#242424;letter-spacing:0.024px;">Seleccionar</div>
<svg class="r" style="left:1475px;top:179px" width="7" height="5" viewBox="0 0 7 5"><path d="M0.6 0.6 L3.5 4.4 L6.4 0.6" fill="none" stroke="#3b3b3b" stroke-width="1.3"/></svg>
<div class="t" style="left:1412.00px;top:203.99px;font-size:13.00px;color:#242424;letter-spacing:-0.273px;">Edición</div>
<div class="r" style="left:1513px;top:104px;width:1px;height:111px;background:#d6d6d6"></div>
<svg class="r" style="left:1538px;top:107px" width="24" height="38" viewBox="0 0 24 38"><rect x="6" y="1" width="12" height="26" rx="6" fill="#83beec" stroke="#2f7fd1" stroke-width="1.8"/><path d="M1 20 A11 11 0 0 0 23 20" fill="none" stroke="#424242" stroke-width="1.6"/><path d="M12 31 V38" stroke="#424242" stroke-width="1.6"/></svg>
<div class="t" style="left:1530.00px;top:153.22px;font-size:14.50px;color:#242424;letter-spacing:0.427px;">Dictar</div>
<svg class="r" style="left:1546px;top:178px" width="8" height="5" viewBox="0 0 8 5"><path d="M0.6 0.6 L4.0 4.4 L7.4 0.6" fill="none" stroke="#3b3b3b" stroke-width="1.3"/></svg>
<div class="t" style="left:1539.00px;top:203.99px;font-size:13.00px;color:#242424;letter-spacing:-0.342px;">Voz</div>
<div class="r" style="left:1585px;top:104px;width:1px;height:111px;background:#d6d6d6"></div>
<svg class="r" style="left:1631px;top:108px" width="36" height="36" viewBox="0 0 36 36"><rect x="1" y="1" width="34" height="34" fill="none" stroke="#e0602f" stroke-width="2"/><rect x="5" y="5" width="11.5" height="11.5" fill="none" stroke="#e0602f" stroke-width="1.8"/><rect x="19.5" y="5" width="11.5" height="11.5" fill="none" stroke="#e0602f" stroke-width="1.8"/><rect x="5" y="19.5" width="11.5" height="11.5" fill="none" stroke="#e0602f" stroke-width="1.8"/><rect x="19.5" y="19.5" width="11.5" height="11.5" fill="none" stroke="#e0602f" stroke-width="1.8"/></svg>
<div class="t" style="left:1598.00px;top:151.22px;font-size:14.50px;color:#242424;letter-spacing:0.317px;">Complementos</div>
<div class="t" style="left:1604.00px;top:203.99px;font-size:13.00px;color:#242424;letter-spacing:0.144px;">Complementos</div>
<div class="r" style="left:1711px;top:104px;width:1px;height:111px;background:#d6d6d6"></div>
<svg class="r" style="left:1738px;top:106px" width="40" height="35" viewBox="0 0 40 35"><rect x="3.3" y="7.2" width="33.3" height="26.5" fill="#fafafa" stroke="#6e6e6e" stroke-width="2"/><rect x="5.5" y="9.5" width="28.5" height="21" fill="none" stroke="#3b3b3b" stroke-width="1.3"/><path d="M5.5 15.5 H34 M27 15.5 V30.5" stroke="#3b3b3b" stroke-width="1.3"/><path d="M7.5 0.5 H15.5 L10 9 H15.5 L0.5 24.5 L6 13 H0.5 Z" fill="#f7d27a" stroke="#e8801e" stroke-width="1.2" stroke-linejoin="miter"/></svg>
<div class="t" style="left:1724.00px;top:151.22px;font-size:14.50px;color:#242424;letter-spacing:0.239px;">Diseñador</div>
<svg class="r" style="left:1804px;top:108px" width="40" height="36" viewBox="0 0 40 36"><path d="M7.5 26 H16 L18.5 35 H13 C10.5 35 9.5 31 7.5 26 Z" fill="#e8a090" stroke="#d35230" stroke-width="1.2" stroke-linejoin="round"/><path d="M22 1 H26.5 C29.5 1 30.5 4 32 9.5 H24.5 Z" fill="#e8a090" stroke="#d35230" stroke-width="1.2" stroke-linejoin="round"/><path d="M22 1 C20 8 18 17 15.5 24.5 C15 25.5 14 26 12 26 H3.5 C1 26 0.5 24 0.7 21 C1.5 14 4 6 8 2.5 C9 1.3 10.5 0.7 12 0.7 H22 Z" fill="#fafafa" stroke="#d35230" stroke-width="1.3" stroke-linejoin="round"/><path d="M24.5 9.5 H35 C38.5 9.5 40 12 39.5 15.5 C38.5 22 36 29 32 33 C31 34.5 29.5 35 28 35 H18 C16.5 35 16 34 16.5 33 C19 25 21.5 17 23.5 10.5 Z" fill="#fafafa" stroke="#d35230" stroke-width="1.3" stroke-linejoin="round"/></svg>
<div class="t" style="left:1799.00px;top:151.22px;font-size:14.50px;color:#242424;letter-spacing:0.644px;">Copilot</div>
<div class="r" style="left:1860px;top:104px;width:1px;height:111px;background:#d6d6d6"></div>
<svg class="r" style="left:1885px;top:201px" width="14" height="8" viewBox="0 0 14 8"><path d="M0.8 0.8 L7 7 L13.2 0.8" fill="none" stroke="#424242" stroke-width="1.3"/></svg>
<div class="r" style="left:224px;top:224px;width:1px;height:767px;background:#d1d1d1"></div>
<div class="r" style="left:227px;top:990px;width:1255px;height:1px;background:#d1d1d1"></div>
<div class="t" style="left:16.00px;top:243.60px;font-size:17.00px;color:#c43e1c;">1</div>
<div class="r" style="left:41px;top:243px;width:160px;height:94px;background:#fff;border:3px solid #c43e1c;border-radius:8px"></div>
<div class="r" style="left:243px;top:266px;width:1202px;height:677px;background:#fff;border:1px solid #c6c6c6"></div>
<svg class="r" style="left:394px;top:377px" width="902" height="238" viewBox="0 0 902 238"><rect x="0.5" y="0.5" width="901" height="237" fill="none" stroke="#8a8a8a" stroke-width="1" stroke-dasharray="2 1"/></svg>
<svg class="r" style="left:394px;top:621px" width="902" height="166" viewBox="0 0 902 166"><rect x="0.5" y="0.5" width="901" height="165" fill="none" stroke="#8a8a8a" stroke-width="1" stroke-dasharray="2 1"/></svg>
<div class="t" style="left:427.79px;top:532.75px;font-size:65.00px;color:#000;transform:scaleX(0.9360);transform-origin:0 0;-webkit-text-stroke:1.6px #fff;">Haga</div>
<div class="t" style="left:593.90px;top:532.75px;font-size:65.00px;color:#000;transform:scaleX(1.0478);transform-origin:0 0;-webkit-text-stroke:1.6px #fff;">clic</div>
<div class="t" style="left:708.61px;top:532.75px;font-size:65.00px;color:#000;transform:scaleX(0.9976);transform-origin:0 0;-webkit-text-stroke:1.6px #fff;">para</div>
<div class="t" style="left:858.96px;top:532.75px;font-size:65.00px;color:#000;transform:scaleX(1.0201);transform-origin:0 0;-webkit-text-stroke:1.6px #fff;">agregar</div>
<div class="t" style="left:1102.77px;top:532.75px;font-size:65.00px;color:#000;transform:scaleX(1.1578);transform-origin:0 0;-webkit-text-stroke:1.6px #fff;">título</div>
<div class="t" style="left:651.96px;top:629.25px;font-size:24.50px;color:#000;transform:scaleX(1.0442);transform-origin:0 0;">Haga</div>
<div class="t" style="left:719.93px;top:629.25px;font-size:24.50px;color:#000;transform:scaleX(1.1276);transform-origin:0 0;">clic</div>
<div class="t" style="left:766.33px;top:629.25px;font-size:24.50px;color:#000;transform:scaleX(1.0759);transform-origin:0 0;">para</div>
<div class="t" style="left:827.57px;top:629.25px;font-size:24.50px;color:#000;transform:scaleX(1.0878);transform-origin:0 0;">agregar</div>
<div class="t" style="left:925.83px;top:629.25px;font-size:24.50px;color:#000;transform:scaleX(1.1815);transform-origin:0 0;">subtítulo</div>
<div class="r" style="left:1482px;top:224px;width:438px;height:769px;background:#f0f0f0"></div>
<div class="r" style="left:1482px;top:224px;width:1px;height:767px;background:#d1d1d1"></div>
<svg class="r" style="left:1498px;top:240px" width="28" height="26" viewBox="0 0 28 26"><defs><linearGradient id="cgl" x1="0" y1="0" x2="0" y2="1"><stop offset="0" stop-color="#ec4c8c"/><stop offset="0.5" stop-color="#ff6438"/><stop offset="1" stop-color="#ffb44c"/></linearGradient><linearGradient id="cgr" x1="0" y1="0" x2="0" y2="1"><stop offset="0" stop-color="#a455ea"/><stop offset="0.55" stop-color="#e2408e"/><stop offset="1" stop-color="#f48a5c"/></linearGradient></defs><g transform="scale(0.7)"><path d="M7.5 26 H16 L18.5 35 H13 C10.5 35 9.5 31 7.5 26 Z" fill="#c9283c"/><path d="M22 1 H26.5 C29.5 1 30.5 4 32 9.5 H24.5 Z" fill="#b02c6c"/><path d="M22 1 C20 8 18 17 15.5 24.5 C15 25.5 14 26 12 26 H3.5 C1 26 0.5 24 0.7 21 C1.5 14 4 6 8 2.5 C9 1.3 10.5 0.7 12 0.7 H22 Z" fill="url(#cgl)"/><path d="M24.5 9.5 H35 C38.5 9.5 40 12 39.5 15.5 C38.5 22 36 29 32 33 C31 34.5 29.5 35 28 35 H18 C16.5 35 16 34 16.5 33 C19 25 21.5 17 23.5 10.5 Z" fill="url(#cgr)"/></g></svg>
<div class="t" style="left:1534.00px;top:241.32px;font-size:25.00px;color:#242424;letter-spacing:0.697px;">Copilot</div>
<svg class="r" style="left:1843px;top:251px" width="17" height="9" viewBox="0 0 17 9"><path d="M0.8 0.8 L8.5 8.2 L16.2 0.8" fill="none" stroke="#424242" stroke-width="1.3"/></svg>
<svg class="r" style="left:1885px;top:248px" width="14" height="14" viewBox="0 0 14 14"><path d="M0.6 0.6 L13.4 13.4 M13.4 0.6 L0.6 13.4" stroke="#424242" stroke-width="1.3"/></svg>
<div class="r" style="left:1497px;top:279px;width:408px;height:698px;background:#f3f3f3;border:1px solid #dcdcdc"></div>
<div class="r" style="left:1518px;top:313px;width:367px;height:325px;background:#fff;border-radius:9px;box-shadow:0 1px 3px rgba(0,0,0,0.16),0 0 1px rgba(0,0,0,0.12)"></div>
<div class="t" style="left:1534.00px;top:333.60px;font-size:17.00px;color:#242424;letter-spacing:0.099px;">Puedo chatear, responder a preguntas y</div>
<div class="t" style="left:1534.00px;top:358.10px;font-size:17.00px;color:#242424;letter-spacing:0.024px;">ayudarle a redactar esta presentación.</div>
<div class="t" style="left:1534.00px;top:408.10px;font-size:17.00px;color:#242424;letter-spacing:0.087px;">Puede probar los siguientes</div>
<div class="t" style="left:1534.00px;top:433.10px;font-size:17.00px;color:#242424;letter-spacing:0.097px;">procedimientos...</div>
<div class="r" style="left:1533px;top:463px;width:337px;height:50px;background:#fff;border:1px solid #d1d1d1;border-radius:4px"></div>
<div class="r" style="left:1533px;top:518px;width:337px;height:50px;background:#fff;border:1px solid #d1d1d1;border-radius:4px"></div>
<div class="r" style="left:1533px;top:573px;width:337px;height:50px;background:#fff;border:1px solid #d1d1d1;border-radius:4px"></div>
<svg class="r" style="left:1556px;top:476px" width="26" height="25" viewBox="0 0 26 25"><rect x="5" y="6" width="20" height="18" rx="3.5" fill="none" stroke="#242424" stroke-width="1.7"/><path d="M1 17 V5 A4 4 0 0 1 5 1 H19" fill="none" stroke="#242424" stroke-width="1.7"/></svg>
<div class="t" style="left:1591.50px;top:480.60px;font-size:17.00px;color:#242424;letter-spacing:-0.076px;">Crear una presentación...</div>
<svg class="r" style="left:1557px;top:530px" width="24" height="27" viewBox="0 0 24 27"><path d="M7 9 V4 A3 3 0 0 1 10 1 H16 L23 8 V22 A3 3 0 0 1 20 25 H19" fill="none" stroke="#242424" stroke-width="1.7"/><path d="M16 1 V8 H23" fill="none" stroke="#242424" stroke-width="1.5"/><circle cx="8" cy="17" r="5.5" fill="none" stroke="#242424" stroke-width="1.8"/><path d="M12 21 L16 25" stroke="#242424" stroke-width="2"/></svg>
<div class="t" style="left:1591.50px;top:524.10px;font-size:17.00px;color:#242424;letter-spacing:0.127px;">Crear presentación a partir de</div>
<div class="t" style="left:1591.50px;top:548.20px;font-size:17.00px;color:#242424;letter-spacing:-0.163px;">archivo...</div>
<svg class="r" style="left:1556px;top:588px" width="26" height="21" viewBox="0 0 26 21"><rect x="1" y="1" width="24" height="19" rx="3.5" fill="none" stroke="#242424" stroke-width="1.8"/><rect x="5" y="5" width="16" height="11" rx="1" fill="none" stroke="#242424" stroke-width="1.5"/><path d="M5 9 H21 M10 9 V16" stroke="#242424" stroke-width="1.5"/></svg>
<div class="t" style="left:1591.50px;top:590.10px;font-size:17.00px;color:#242424;letter-spacing:0.080px;">Agregar una diapositiva sobre...</div>
<div class="r" style="left:1519px;top:809px;width:366px;height:141px;background:#fff;border:1px solid #d4d4d4;border-radius:9px;box-shadow:0 1px 2px rgba(0,0,0,0.10);overflow:hidden"></div>
<div class="r" style="left:1519px;top:943px;width:366px;height:7px;background:linear-gradient(90deg,#d9492a,#c43e1c);border-radius:0 0 9px 9px"></div>
<div class="t" style="left:1539.00px;top:835.60px;font-size:17.00px;color:#707070;letter-spacing:0.129px;">Haga preguntas y trabaje con esta</div>
<div class="t" style="left:1539.00px;top:860.90px;font-size:17.00px;color:#707070;letter-spacing:0.151px;">presentación</div>
<div class="t" style="left:1539.00px;top:905.99px;font-size:13.00px;color:#707070;letter-spacing:-0.352px;">0/2000</div>
<svg class="r" style="left:1760px;top:900px" width="18" height="21" viewBox="0 0 18 21"><rect x="0.8" y="0.8" width="16.4" height="19" rx="2.5" fill="none" stroke="#424242" stroke-width="1.5"/><path d="M0.8 16.5 H17.2" stroke="#424242" stroke-width="1.3"/><rect x="4" y="4" width="10" height="2.8" fill="none" stroke="#424242" stroke-width="1.2"/></svg>
<div class="r" style="left:1788px;top:890px;width:1px;height:39px;background:#dcdcdc"></div>
<svg class="r" style="left:1807px;top:900px" width="16" height="21" viewBox="0 0 16 21"><rect x="4.5" y="0.8" width="7" height="13" rx="3.5" fill="none" stroke="#424242" stroke-width="1.5"/><path d="M1 9 A7 7 0 0 0 15 9" fill="none" stroke="#424242" stroke-width="1.5"/><path d="M8 16 V20.5" stroke="#424242" stroke-width="1.5"/></svg>
<svg class="r" style="left:1849px;top:900px" width="21" height="20" viewBox="0 0 21 20"><path d="M1 1 L20 10 L1 19 L4 10 Z M4 10 H12" fill="none" stroke="#424242" stroke-width="1.5" stroke-linejoin="round"/></svg>
<div class="r" style="left:0px;top:993px;width:1920px;height:27px;background:#f3f3f3"></div>
<div class="t" style="left:15.00px;top:1000.99px;font-size:13.00px;color:#3b3b3b;letter-spacing:0.039px;">Diapositiva 1 de 1</div>
<div class="t" style="left:161.00px;top:1000.99px;font-size:13.00px;color:#3b3b3b;letter-spacing:-0.222px;">Español (España)</div>
<svg class="r" style="left:282px;top:998px" width="17" height="18" viewBox="0 0 17 18"><circle cx="8" cy="2.5" r="2" fill="none" stroke="#424242" stroke-width="1.1"/><path d="M1 5 C4 7 12 7 15 5 M8 7 V11 M5 17 L8 11 L11 14" fill="none" stroke="#424242" stroke-width="1.1"/><path d="M9.5 14 L12 16.5 L16.5 11" fill="none" stroke="#424242" stroke-width="1.2"/></svg>
<div class="t" style="left:304.00px;top:1000.99px;font-size:13.00px;color:#3b3b3b;letter-spacing:0.187px;">Accesibilidad: todo correcto</div>
<svg class="r" style="left:1390px;top:997px" width="20" height="20" viewBox="0 0 20 20"><path d="M7 3.5 L10 0.8 L13 3.5" fill="none" stroke="#424242" stroke-width="1.1"/><path d="M1 7.5 H19 M1 12.5 H19 M1 17.5 H19" stroke="#424242" stroke-width="1.2"/></svg>
<div class="t" style="left:1412.00px;top:1000.99px;font-size:13.00px;color:#3b3b3b;letter-spacing:0.010px;">Notas</div>
<div class="r" style="left:1471px;top:993px;width:49px;height:27px;background:#dcdcdc"></div>
<svg class="r" style="left:1486px;top:999px" width="20" height="16" viewBox="0 0 20 16"><rect x="0.8" y="0.8" width="18.4" height="14.4" fill="none" stroke="#424242" stroke-width="1.4"/><path d="M4 1 V15 M4 11.5 H19" stroke="#424242" stroke-width="1.2"/><rect x="7.5" y="4" width="8" height="4" fill="none" stroke="#424242" stroke-width="1.2"/></svg>
<svg class="r" style="left:1536px;top:999px" width="20" height="17" viewBox="0 0 20 17"><rect x="1" y="1" width="7" height="6" fill="none" stroke="#424242" stroke-width="1.4"/><rect x="12" y="1" width="7" height="6" fill="none" stroke="#424242" stroke-width="1.4"/><rect x="1" y="10" width="7" height="6" fill="none" stroke="#424242" stroke-width="1.4"/><rect x="12" y="10" width="7" height="6" fill="none" stroke="#424242" stroke-width="1.4"/></svg>
<svg class="r" style="left:1586px;top:998px" width="19" height="18" viewBox="0 0 19 18"><path d="M0.8 1 H7 C8.5 1 9.5 2 9.5 3 C9.5 2 10.5 1 12 1 H18.2 V16 H12 C10.5 16 9.5 17 9.5 17.5 C9.5 17 8.5 16 7 16 H0.8Z M9.5 3 V17" fill="none" stroke="#424242" stroke-width="1.2"/><path d="M3 5 H7 M3 8 H7 M3 11 H7 M12 5 H16 M12 8 H16 M12 11 H16" stroke="#424242" stroke-width="1"/></svg>
<svg class="r" style="left:1636px;top:998px" width="19" height="19" viewBox="0 0 19 19"><path d="M0 1 H19" stroke="#424242" stroke-width="1.4"/><rect x="2" y="1" width="15" height="9" fill="none" stroke="#424242" stroke-width="1.2"/><path d="M6.5 4 H12.5" stroke="#424242" stroke-width="1.2"/><path d="M9.5 10 V17.5 M5 18 H14" stroke="#424242" stroke-width="1.4"/></svg>
<div class="r" style="left:1678px;top:1006px;width:10px;height:1px;background:#424242"></div>
<div class="r" style="left:1694px;top:1007px;width:124px;height:1px;background:#8a8a8a"></div>
<div class="r" style="left:1736px;top:999px;width:6px;height:16px;background:#5c5c5c;border-radius:1px"></div>
<div class="r" style="left:1755px;top:1003px;width:1px;height:8px;background:#8a8a8a"></div>
<svg class="r" style="left:1824px;top:1001px" width="11" height="11" viewBox="0 0 11 11"><path d="M5.5 0 V11 M0 5.5 H11" stroke="#424242" stroke-width="1.1"/></svg>
<div class="t" style="left:1851.00px;top:1000.99px;font-size:13.00px;color:#3b3b3b;letter-spacing:-0.210px;">75 %</div>
<svg class="r" style="left:1894px;top:997px" width="22" height="20" viewBox="0 0 22 20"><rect x="6.5" y="5.5" width="9" height="9" fill="none" stroke="#424242" stroke-width="1.3"/><path d="M8 3 L11 0.6 L14 3 M8 17 L11 19.4 L14 17 M4 7 L1 10 L4 13 M18 7 L21 10 L18 13" fill="none" stroke="#424242" stroke-width="1.1"/></svg>
</body></html>
